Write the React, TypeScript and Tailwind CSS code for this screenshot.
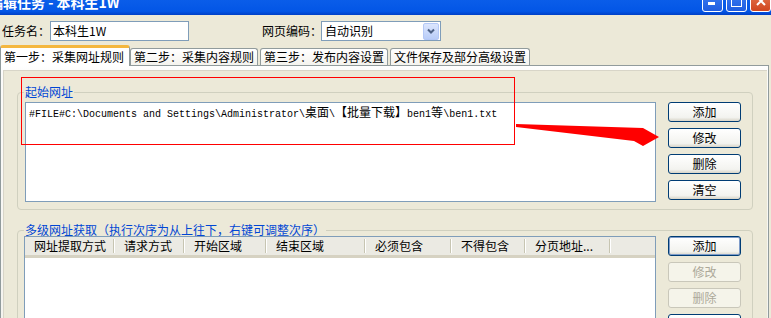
const ui = "font-['Noto_Sans_CJK_SC','Liberation_Sans',sans-serif]";

const XpButton = ({ label, kind = "normal" }: { label: string; kind?: "normal" | "default" | "disabled" }) => {
  const cls =
    kind === "disabled"
      ? "border-[#C9C7BA] bg-[#F5F4EA] text-[#ACA899]"
      : kind === "default"
      ? "border-[#003C74] bg-[linear-gradient(#FFFFFF,#F3F3EF_80%,#D8D4C8)] text-black shadow-[inset_0_0_0_1px_#7F9CC9]"
      : "border-[#003C74] bg-[linear-gradient(#FFFFFF,#F3F3EF_80%,#D8D4C8)] text-black";
  return (
    <div className={`w-[73px] h-[20px] shrink-0 rounded-[3px] border flex items-center justify-center text-[12px] leading-none ${cls}`}>
      {label}
    </div>
  );
};

const Tab = ({ label, active }: { label: string; active?: boolean }) =>
  active ? (
    <div className="h-[21px] w-[130px] bg-white border-x border-[#919B9C] border-t-[3px] border-t-[#F4B73F] rounded-t-[3px] pl-[3px] pt-[1px] text-[12px] leading-[15px] whitespace-nowrap relative z-10 -mb-px">
      {label}
    </div>
  ) : (
    <div className="h-[17px] border border-b-0 border-[#919B9C] rounded-t-[3px] bg-[linear-gradient(#FFFFFF,#F4F3EE)] px-[3px] text-[12px] leading-[16px] whitespace-nowrap">
      {label}
    </div>
  );

const columns = [
  { name: "网址提取方式", w: 90 },
  { name: "请求方式", w: 70 },
  { name: "开始区域", w: 82 },
  { name: "结束区域", w: 99 },
  { name: "必须包含", w: 86 },
  { name: "不得包含", w: 74 },
  { name: "分页地址...", w: 85 },
];

export default function App() {
  return (
    <div className={`relative w-[771px] h-[318px] overflow-hidden bg-[#ECE9D8] text-black ${ui}`}>
      {/* title bar, top part cut off */}
      <div className="h-[15px] flex justify-between overflow-hidden bg-[linear-gradient(#0A5DE9,#0356E6_75%,#0040C6)]">
        <div className="-ml-[11px] -mt-[5px] text-white font-bold text-[14px] leading-[14px] whitespace-pre">编辑任务 - 本科生1W</div>
        <div className="flex gap-[3px] -mt-[9px]">
          <div className="w-[21px] h-[21px] rounded-[3px] border border-white bg-[linear-gradient(#3C7EF3,#1F5DE0)] flex items-end pl-[5px] pb-[6px]">
            <div className="w-[7px] h-[3px] bg-white" />
          </div>
          <div className="w-[21px] h-[21px] rounded-[3px] border border-white bg-[linear-gradient(#3C7EF3,#1F5DE0)] flex items-end justify-center pb-[4px]">
            <div className="w-[11px] h-[12px] border border-white border-t-[3px]" />
          </div>
          <div className="w-[21px] h-[21px] rounded-[3px] border border-white bg-[linear-gradient(#E57A53,#D0461F)] flex items-end pl-[5px] pb-[5px]">
            <svg width="10" height="10" viewBox="0 0 10 10">
              <path d="M1 1L9 9M9 1L1 9" stroke="white" strokeWidth="2" />
            </svg>
          </div>
        </div>
      </div>

      {/* name / encoding row */}
      <div className="h-[30px] flex items-center pt-[2px] text-[12px] whitespace-nowrap">
        <span className="ml-[2px] w-[48px] shrink-0">任务名：</span>
        <div className="w-[139px] h-[20px] shrink-0 border border-[#7F9DB9] bg-white pl-[2px] leading-[18px]">本科生1W</div>
        <span className="ml-[73px] w-[59px] shrink-0">网页编码：</span>
        <div className="w-[120px] h-[20px] shrink-0 border border-[#7F9DB9] bg-white flex items-center justify-between pl-[3px] pr-px">
          <span className="leading-[18px]">自动识别</span>
          <div className="w-[16px] h-[17px] rounded-[2px] border border-[#B4C8F6] bg-[linear-gradient(#DCE6FD,#B8CCF8)] flex items-center justify-center">
            <svg width="8" height="6" viewBox="0 0 8 6">
              <path d="M1 1.5L4 4.5L7 1.5" stroke="#4D6185" strokeWidth="2" fill="none" />
            </svg>
          </div>
        </div>
      </div>

      {/* tabs */}
      <div className="h-[20px] flex items-end">
        <Tab label="第一步：采集网址规则" active />
        <Tab label="第二步：采集内容规则" />
        <div className="w-[2px]" />
        <Tab label="第三步：发布内容设置" />
        <div className="w-[2px]" />
        <Tab label="文件保存及部分高级设置" />
      </div>

      {/* tab page */}
      <div className="w-[769px] h-[260px] border border-[#919B9C] bg-[linear-gradient(#FFFFFF,#FBFBF9_8px,#F4F3EE)] pt-[4px] pl-[2px] pr-px">
        <div className="h-full border-l border-t border-[#D8D5C8] bg-[#ECE9D8] pt-[15px]">
          <fieldset className="ml-[13px] w-[736px] border border-[#D0D0BF] rounded-[4px] pl-[7px] pr-[11px] pt-[4px] pb-[7px]">
            <legend className="-ml-[1px] px-[1px] text-[12px] leading-[12px] text-[#0046D5]">起始网址</legend>
            <div className="flex gap-[12px]">
              <div className="w-[631px] h-[100px] border border-[#7F9DB9] bg-white pl-[3px] pt-[2px] font-['Liberation_Mono',monospace] text-[10px] leading-[14px] whitespace-pre">
                #FILE#C:\Documents and Settings\Administrator\<span className={`${ui} text-[12px]`}>桌面</span>\<span className={`${ui} text-[12px]`}>【批量下载】</span>ben1<span className={`${ui} text-[12px]`}>等</span>\ben1.txt
              </div>
              <div className="flex flex-col gap-[6px]">
                <XpButton label="添加" />
                <XpButton label="修改" />
                <XpButton label="删除" />
                <XpButton label="清空" />
              </div>
            </div>
          </fieldset>

          <fieldset className="mt-[14px] ml-[13px] w-[736px] border border-[#D0D0BF] rounded-[4px] pl-[6px] pr-[11px] pt-0">
            <legend className="px-[1px] text-[12px] leading-[12px] text-[#0046D5] whitespace-nowrap">多级网址获取（执行次序为从上往下，右键可调整次序）</legend>
            <div className="flex gap-[12px]">
              <div className="w-[632px] h-[100px] border border-[#7F9DB9] bg-white">
                <div className="h-[21px] flex bg-[#EBEAE3] border-b-[3px] border-[#D6D2C2]">
                  {columns.map((c) => (
                    <div key={c.name} style={{ width: c.w }} className="shrink-0 flex items-center justify-between">
                      <span className="pl-[9px] text-[12px] leading-none whitespace-nowrap">{c.name}</span>
                      <div className="w-[2px] h-[14px] border-l border-[#C7C5B2] border-r border-r-white" />
                    </div>
                  ))}
                </div>
              </div>
              <div className="flex flex-col gap-[6px]">
                <XpButton label="添加" kind="default" />
                <XpButton label="修改" kind="disabled" />
                <XpButton label="删除" kind="disabled" />
                <XpButton label="" />
              </div>
            </div>
          </fieldset>
        </div>
      </div>

      {/* annotation overlay: red box + arrow */}
      <div className="absolute left-[21px] top-[77px] w-[494px] h-[68px] border border-[#FF0000] pointer-events-none" />
      <svg className="absolute left-0 top-0 pointer-events-none" width="771" height="318">
        <polygon points="516,124 643,128 659,137 643,146 634,141 516,127" fill="#FF0000" />
      </svg>
    </div>
  );
}
